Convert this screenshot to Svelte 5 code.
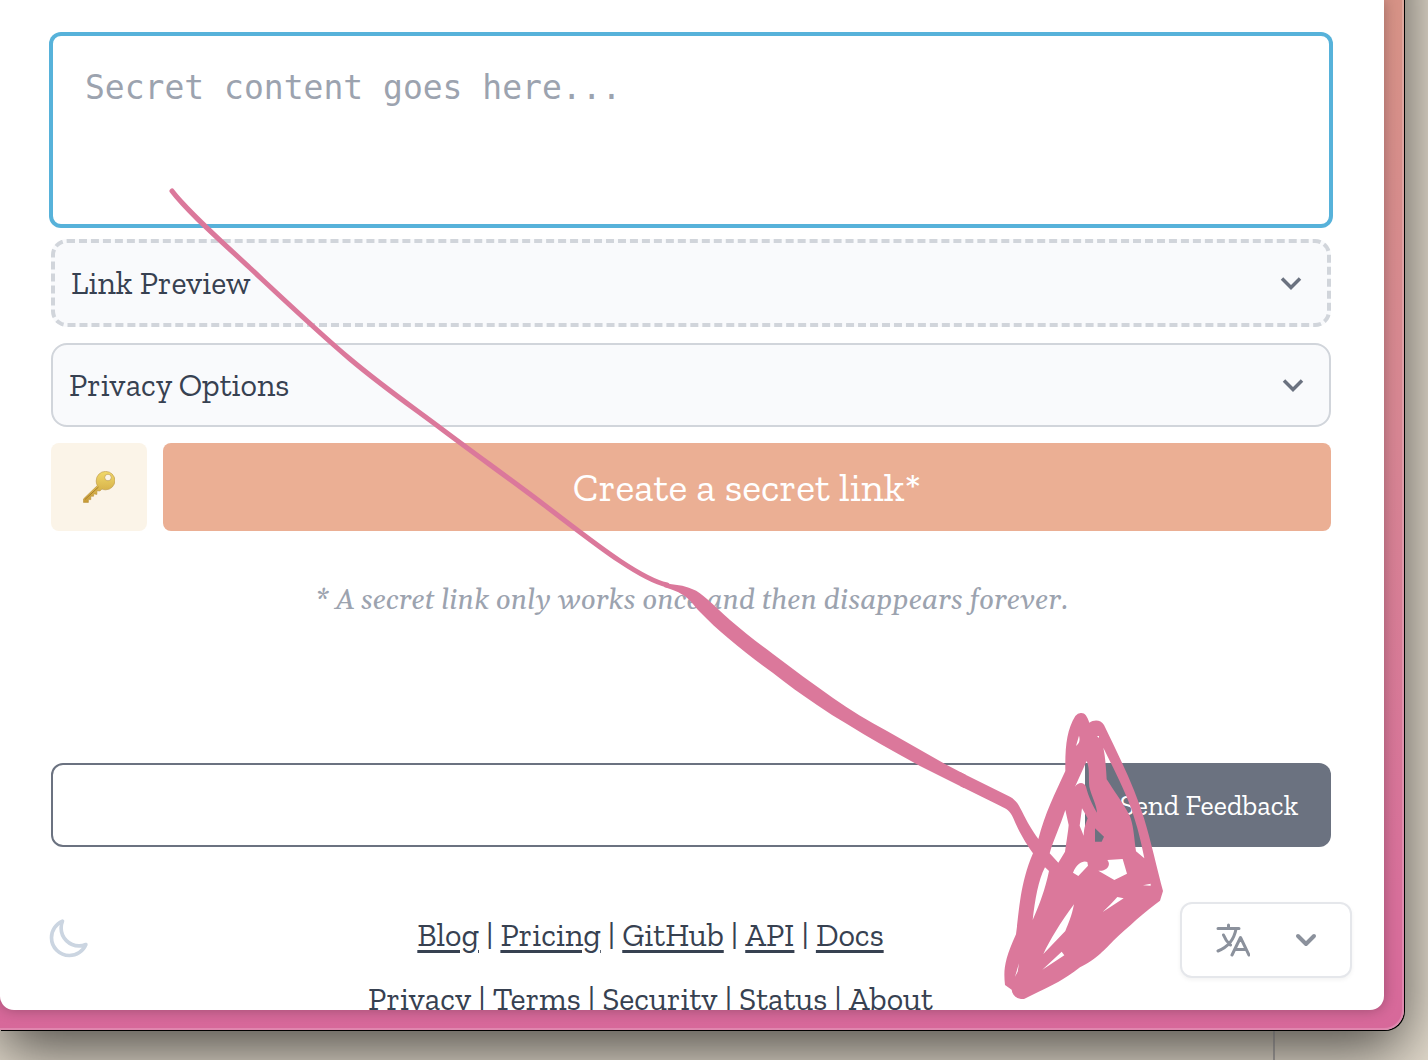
<script lang="ts">
  const primary = ['Blog', 'Pricing', 'GitHub', 'API', 'Docs'];
  const secondary = ['Privacy', 'Terms', 'Security', 'Status', 'About'];
  let secret = $state('');
  let feedback = $state('');
</script>

<div class="desktop">
  <div class="window">
    <main class="panel">
      <form class="secret" onsubmit={(e) => e.preventDefault()}>
        <textarea bind:value={secret} aria-label="Secret content" placeholder="Secret content goes here..."></textarea>
        <button type="button" class="fold dashed">
          <span>Link Preview</span>
          <svg class="chevron" viewBox="0 0 24 24" aria-hidden="true"><path d="M3 7.500l9 9 9-9" /></svg>
        </button>
        <button type="button" class="fold">
          <span>Privacy Options</span>
          <svg class="chevron" viewBox="0 0 24 24" aria-hidden="true"><path d="M3 7.500l9 9 9-9" /></svg>
        </button>
        <div class="actions">
          <button type="button" class="key" aria-label="Generate password">
            <svg viewBox="0 0 32 32" aria-hidden="true">
              <defs>
                <linearGradient id="gold" x1="0" y1="0" x2="0" y2="1">
                  <stop offset="0" stop-color="#f1d96b" />
                  <stop offset="1" stop-color="#c79a35" />
                </linearGradient>
              </defs>
              <path fill="url(#gold)" stroke="#b8923b" stroke-width=".6" fill-rule="evenodd" d="M22.500.4a9.300 9.300 0 0 0-9.300 9.600c0 1.800.4 3.300 1.100 4.600L.4 28v3.400h5v-2.800h2.400v-3.400h2.800v-2.400l3.300.6v-3.700l3 .3 2-2c1.200.6 2.400.8 3.800.8a9.200 9.200 0 0 0 0-18.400zM25 3.200a3.300 3.300 0 1 1 0 6.600 3.300 3.300 0 0 1 0-6.600z" />
              <path d="M2 28.500L15.500 16" stroke="#a67d2d" fill="none" />
            </svg>
          </button>
          <button type="submit" class="create">Create a secret link*</button>
        </div>
      </form>

      <p class="note">* A secret link only works once and then disappears forever.</p>

      <form class="feedback" onsubmit={(e) => e.preventDefault()}>
        <input type="text" bind:value={feedback} aria-label="Feedback" />
        <button type="submit">Send Feedback</button>
      </form>

      <footer>
        <button type="button" class="moon" aria-label="Toggle dark mode">
          <svg viewBox="0 0 24 24" aria-hidden="true">
            <path d="M21.752 15.002A9.720 9.720 0 0 1 18 15.750c-5.385 0-9.750-4.365-9.750-9.750 0-1.330.266-2.597.748-3.752A9.753 9.753 0 0 0 3 11.250C3 16.635 7.365 21 12.750 21a9.753 9.753 0 0 0 9.002-5.998Z" />
          </svg>
        </button>
        <nav aria-label="Footer">
          <div class="links">
            {#each primary as item, i}{#if i > 0}<span>|</span>{/if}<a href="#{item.toLowerCase()}">{item}</a>{/each}
          </div>
          <div class="links">
            {#each secondary as item, i}{#if i > 0}<span>|</span>{/if}<a href="#{item.toLowerCase()}">{item}</a>{/each}
          </div>
        </nav>
        <button type="button" class="language" aria-label="Choose language">
          <svg class="translate" viewBox="0 0 34 34" aria-hidden="true">
            <path d="M2 5.500h21M12.500 2v3M20 6c-2 11-8 18-18 22M7.500 12c1.500 4 4 7.500 7 10M16 32l8.500-17.500L33 32M19 26.500h11" />
          </svg>
          <svg class="caret" viewBox="0 0 24 24" aria-hidden="true"><path d="M4 8l8 8 8-8" /></svg>
        </button>
      </footer>
    </main>
  </div>
  <span class="seam"></span>

  <svg class="arrow" width="1428" height="1060" viewBox="0 0 1428 1060" aria-hidden="true">
    <path class="tail" d="M172 191C187 211 220 240 250 268C280 296 318 332 350 359C382 386 411 406 443 430C475 454 514 482 543 504C572 526 600 548 620 561Q650 581 667 585" />
    <path d="M665 583C674 585 684 585 692 589C698 591 702 595 707 599C715 606 722 613 730 620C744 632 758 643 773 654C793 669 813 684 833 698C850 710 868 721 887 731L945 764L966 775L964 788L920 766C895 752 871 739 847 724C837 718 827 712 817 705C802 695 787 684 773 673C758 662 743 651 728 638C718 630 709 621 700 612C694 606 690 599 683 595C677 591 670 589 664 587Z" />
    <path fill-rule="evenodd" transform="translate(960 690) scale(.33333)" d="M364 69C375 69 381 78 388 98C402 88 422 88 432 105C480 205 525 295 552 385C572 450 592 540 609 603L600 632C560 660 500 715 460 752C425 788 410 805 360 832C310 870 280 885 236 905L192 927C168 928 157 915 155 899L135 885C130 840 133 810 168 733C178 660 180 580 219 490C190 450 175 420 160 385C150 360 140 357 120 347L0 288V246L150 320C185 340 180 370 235 447C255 370 285 310 316 243C315 170 320 120 346 78Q354 68 364 69Z
      M345 290L380 213C390 235 385 260 388 290C395 320 410 345 411 368C400 350 385 320 378 290C372 275 355 275 345 290Z
      M357 137L348 168C358 160 361 150 357 137Z
      M411 138H417V144Z
      M430 173C460 235 500 310 520 375C538 430 546 470 553 505L528 484C522 440 520 400 508 375C490 340 460 300 440 268C438 235 436 200 430 173Z
      M316 360C300 410 280 450 269 490L295 518L315 485C320 450 325 420 326 405Z
      M366 355L359 407L371 437C372 410 378 400 383 385Z
      M405 415L432 440L425 455H405Z
      M339 548C350 520 370 510 382 516L384 527L355 558Z
      M442 510L488 507L501 551L463 570L415 542C440 545 455 525 442 510Z
      M255 532L267 543C255 600 240 640 218 690C225 630 235 570 255 532Z
      M342 643C335 680 325 700 316 723L250 792C270 750 300 700 342 643Z
      M428 666C445 650 460 635 472 621L491 625Z
      M549 586L572 581V587Z
      M305 785L313 796L247 839Z
      M177 820L165 860L173 845Z" />
  </svg>
</div>

<style>
  :global(body) {
    margin: 0;
  }
  .desktop {
    position: relative;
    box-sizing: border-box;
    height: 100vh;
    overflow: hidden;
    padding: 0 24px 30px 0;
    background: #e2dacc;
    display: flex;
    font-family: "Zilla Slab", "DejaVu Serif Condensed", "DejaVu Serif", serif;
    color: #374151;
  }
  /* The window carries on above the visible area, so its shadow does too. */
  .window {
    flex: 1;
    display: flex;
    box-sizing: border-box;
    min-width: 0;
    margin-top: -80px;
    padding: 80px 18px 18px 0;
    border-right: 2px solid rgba(255, 255, 255, 0.2);
    border-bottom: 2px solid rgba(255, 255, 255, 0.2);
    border-bottom-right-radius: 20px;
    background: linear-gradient(180deg, #d69286 0%, #d69286 8%, #d68592 46%, #d76f9a 88%, #d7689a 100%) border-box;
    box-shadow: 1px 1px 0 #000, 0 20px 60px 0 rgba(0, 0, 0, 0.65);
  }
  .panel {
    flex: 1;
    min-width: 0;
    overflow: hidden;
    background: #fff;
    border-radius: 0 0 14px 14px;
    box-shadow: 0 0 14px rgba(0, 0, 0, 0.28);
  }
  button,
  input,
  textarea {
    box-sizing: border-box;
    margin: 0;
    font-family: inherit;
  }
  .secret {
    display: flex;
    flex-direction: column;
    gap: 16px;
    padding: 34px 53px 0 51px;
  }
  textarea {
    height: 192px;
    margin-bottom: -3px;
    padding: 32px;
    border: 2px solid #57b2da;
    border-radius: 10px;
    box-shadow: 0 0 0 2px #57b2da;
    outline: none;
    resize: none;
    font: 33px/40px "DejaVu Sans Mono", monospace;
  }
  textarea::placeholder {
    color: #9ca3af;
    opacity: 1;
  }
  .fold {
    display: flex;
    align-items: center;
    justify-content: space-between;
    height: 84px;
    padding: 0 24px 0 16px;
    border: 2px solid #d1d5db;
    border-radius: 16px;
    background: #f9fafc;
    color: #374151;
    font-size: 32px;
  }
  .dashed {
    height: 88px;
    border: 4px dashed #d1d5db;
  }
  .chevron {
    width: 24px;
    height: 24px;
    fill: none;
    stroke: #6b7280;
    stroke-width: 3.5;
  }
  .actions {
    display: flex;
    gap: 16px;
    height: 88px;
  }
  .key {
    flex: 0 0 96px;
    display: grid;
    place-items: center;
    border: 0;
    border-radius: 8px;
    background: #fbf4e8;
  }
  .key svg {
    width: 32px;
    height: 32px;
  }
  .create {
    flex: 1;
    border: 0;
    border-radius: 8px;
    background: #ebaf94;
    color: #fff;
    font-size: 40px;
  }
  .note {
    margin: 50px 0 0;
    text-align: center;
    font: italic 28px/40px Georgia, Gelasio, "Liberation Serif", serif;
    color: #9ca3af;
  }
  .feedback {
    display: flex;
    height: 84px;
    margin: 142px 53px 0 51px;
  }
  .feedback input {
    flex: 1;
    min-width: 0;
    padding: 0 16px;
    border: 2px solid #6b7280;
    border-radius: 12px 0 0 12px;
    font-size: 28px;
  }
  .feedback button {
    flex: 0 0 244px;
    padding: 0;
    border: 0;
    border-radius: 0 12px 12px 0;
    background: #6b7280;
    color: #fff;
    font-size: 28px;
  }
  footer {
    display: grid;
    grid-template-columns: 72px 1fr 172px;
    align-items: start;
    padding: 55px 32px 0 49px;
  }
  .moon {
    padding: 15px 0 0;
    border: 0;
    background: none;
    text-align: left;
  }
  .moon svg {
    display: block;
    width: 44px;
    height: 44px;
    margin-left: -3px;
    fill: none;
    stroke: #cbd5e1;
    stroke-width: 2;
    stroke-linejoin: round;
  }
  nav {
    padding-top: 1px;
    font-size: 32px;
    line-height: 64px;
  }
  .links {
    display: flex;
    justify-content: center;
    gap: 7px;
    white-space: nowrap;
  }
  a {
    color: inherit;
    text-decoration: underline;
    text-decoration-thickness: 3px;
    text-underline-offset: 4px;
  }
  .language {
    display: flex;
    align-items: center;
    justify-content: space-between;
    height: 76px;
    padding: 0 32px 0 34px;
    border: 2px solid #e5e7eb;
    border-radius: 12px;
    background: #fff;
    box-shadow: 0 2px 4px rgba(0, 0, 0, 0.05);
  }
  .language svg {
    fill: none;
    stroke: #8b919c;
    stroke-linecap: round;
    stroke-linejoin: round;
  }
  .translate {
    width: 34px;
    height: 34px;
    stroke-width: 3;
  }
  .caret {
    width: 24px;
    height: 24px;
    stroke-width: 4;
  }
  .seam {
    position: absolute;
    right: 153px;
    bottom: 0;
    width: 2px;
    height: 29px;
    background: rgba(90, 90, 95, 0.5);
  }
  .arrow {
    position: absolute;
    left: 0;
    top: 0;
    fill: #db789b;
    pointer-events: none;
  }
  .tail {
    fill: none;
    stroke: #db789b;
    stroke-width: 5;
    stroke-linecap: round;
  }
</style>
